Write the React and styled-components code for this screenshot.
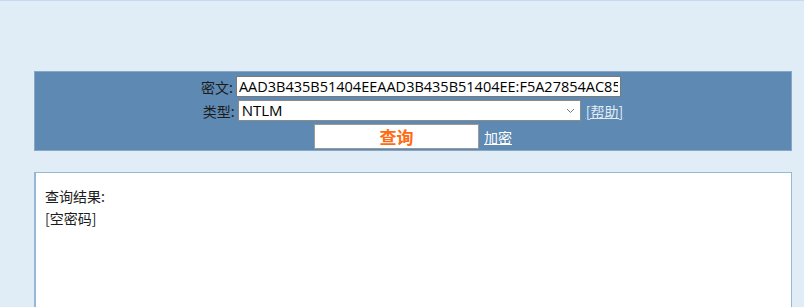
import React from "react";
import styled, { createGlobalStyle } from "styled-components";

const GlobalStyle = createGlobalStyle`
  html, body {
    margin: 0;
    padding: 0;
    background: #e1edf6;
  }
  body {
    font-family: "Noto Sans CJK SC", "Noto Sans", sans-serif;
    border-top: 1px solid #c6daed;
    height: 306px;
    overflow: hidden;
  }
`;

const Page = styled.div`
  padding: 70px 12px 0 34px;
`;

const Panel = styled.form`
  display: flex;
  flex-direction: column;
  align-items: center;
  gap: 3px;
  background: #5d89b3;
  border: 1px solid #86a7c6;
  padding: 4px 0 2px;
  height: 80px;
  box-sizing: border-box;
`;

const Row = styled.div`
  display: flex;
  align-items: center;
  margin-left: ${(p) => p.shift || 0}px;
`;

const Label = styled.label`
  font-size: 14px;
  color: #1c1c1c;
  margin-right: 3px;
  line-height: 20px;
`;

const TextInput = styled.input`
  width: 385px;
  height: 21px;
  box-sizing: border-box;
  border: 1px solid #7a7a7a;
  padding: 0 2px;
  font-family: "Open Sans", "Noto Sans", sans-serif;
  font-size: 14.5px;
  color: #000;
  outline: none;
`;

const Select = styled.div`
  position: relative;
  width: 343px;
  height: 21px;
  box-sizing: border-box;
  border: 1px solid #8a8a8a;
  background: #fff;
  padding: 0 3px;
  font-family: "Open Sans", "Noto Sans", sans-serif;
  font-size: 15px;
  line-height: 19px;
  color: #000;
`;

const Chevron = styled.svg`
  position: absolute;
  right: 5px;
  top: 7px;
`;

const HelpLink = styled.a`
  margin-left: 5px;
  font-size: 14px;
  color: #e3ecf5;
  text-decoration: underline;
  line-height: 20px;
`;

const SubmitButton = styled.button`
  width: 165px;
  height: 25px;
  box-sizing: border-box;
  background: #fff;
  border: 1px solid #9a9a9a;
  color: #ff6a13;
  font-family: "Noto Sans CJK SC", sans-serif;
  font-weight: bold;
  font-size: 17px;
  padding: 0;
  line-height: 23px;
`;

const EncryptLink = styled.a`
  margin-left: 5px;
  font-size: 14px;
  color: #fff;
  text-decoration: underline;
`;

const ResultBox = styled.div`
  margin-top: 21px;
  background: #fff;
  border: 1px solid #98b6d5;
  border-left-width: 2px;
  border-bottom: none;
  height: 135px;
  padding: 12px 9px;
  box-sizing: border-box;
  font-size: 14px;
  line-height: 22px;
  color: #1c1c1c;
`;

export default function App() {
  return (
    <>
      <GlobalStyle />
      <Page>
        <Panel onSubmit={(e) => e.preventDefault()}>
          <Row shift={-4}>
            <Label>密文:</Label>
            <TextInput
              readOnly
              value="AAD3B435B51404EEAAD3B435B51404EE:F5A27854AC85"
            />
          </Row>
          <Row>
            <Label>类型:</Label>
            <Select>
              NTLM
              <Chevron width="9" height="6" viewBox="0 0 9 6">
                <path d="M1 1l3.5 3.5L8 1" fill="none" stroke="#777" strokeWidth="1" />
              </Chevron>
            </Select>
            <HelpLink href="#">[帮助]</HelpLink>
          </Row>
          <Row>
            <SubmitButton type="submit">查询</SubmitButton>
            <EncryptLink href="#">加密</EncryptLink>
          </Row>
        </Panel>
        <ResultBox>
          <div>查询结果:</div>
          <div>[空密码]</div>
        </ResultBox>
      </Page>
    </>
  );
}
